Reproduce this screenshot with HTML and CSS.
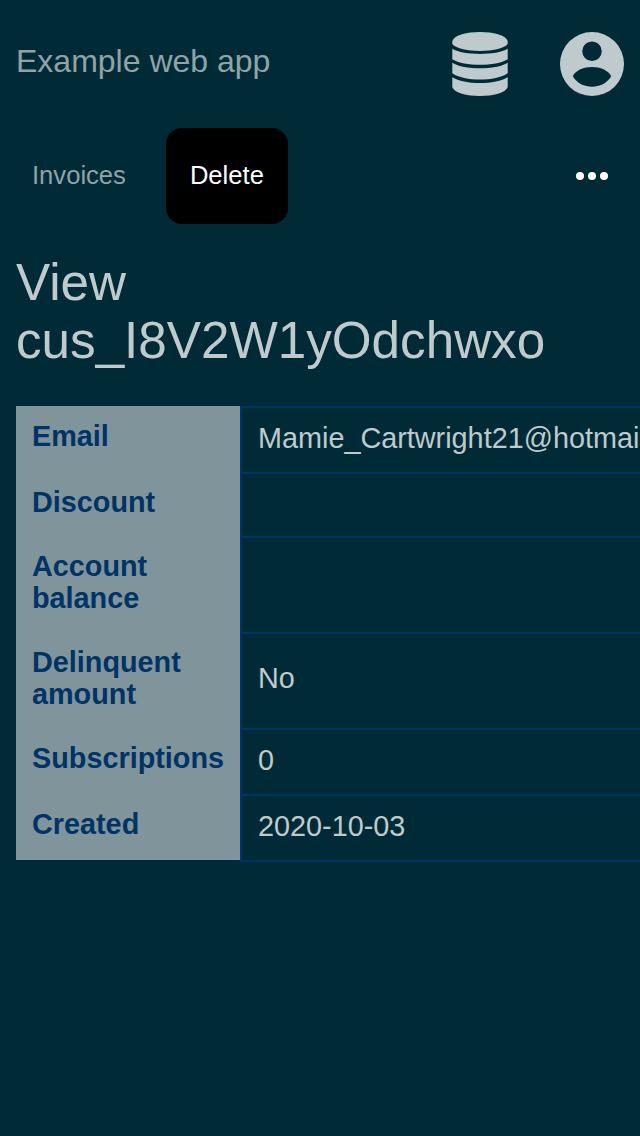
FILE: index.html
```html
<!DOCTYPE html>
<html lang="en">
<head>
<meta charset="utf-8">
<title>Example web app</title>
<link rel="stylesheet" href="styles.css">
</head>
<body>
<header class="header">
  <a class="brand">Example web app</a>
  <div class="menus">
    <svg class="icon" viewBox="0 0 64 64" aria-label="Administration">
      <path d="M4.3 9C8 -3 56 -3 59.7 9V12C52 21.3 12 21.3 4.3 12Z"/>
      <path d="M4.3 16.8C16 23.7 48 23.7 59.7 16.8V27.2C48 34.6 16 34.6 4.3 27.2Z"/>
      <path d="M4.3 30.8C16 38.2 48 38.2 59.7 30.8V41.2C48 49.6 16 49.6 4.3 41.2Z"/>
      <path d="M4.3 45.2C16 52.9 48 52.9 59.7 45.2V55C56 67 8 67 4.3 55Z"/>
    </svg>
    <svg class="icon" viewBox="0 0 64 64" aria-label="Account">
      <path fill-rule="evenodd" d="M32 0A32 32 0 1 1 32 64A32 32 0 1 1 32 0ZM32 9.5A9.7 9.7 0 1 0 32 29A9.7 9.7 0 1 0 32 9.5ZM12.8 44.2C21 58.2 43 58.2 51.2 44.2C45.5 31.8 18.5 31.8 12.8 44.2Z"/>
    </svg>
  </div>
</header>
<nav class="nav">
  <a class="tab">Invoices</a>
  <a class="tab current">Delete</a>
  <svg class="more" viewBox="0 0 32 8" aria-label="More"><circle cx="4" cy="4" r="4"/><circle cx="16" cy="4" r="4"/><circle cx="28" cy="4" r="4"/></svg>
</nav>
<main class="content">
  <h1 class="title">View cus_I8V2W1yOdchwxo</h1>
  <table class="details">
    <tr class="row"><th>Email</th><td>Mamie_Cartwright21@hotmai</td></tr>
    <tr class="row short"><th>Discount</th><td></td></tr>
    <tr class="row tall"><th>Account balance</th><td></td></tr>
    <tr class="row tall"><th>Delinquent amount</th><td>No</td></tr>
    <tr class="row"><th>Subscriptions</th><td>0</td></tr>
    <tr class="row last"><th>Created</th><td>2020-10-03</td></tr>
  </table>
</main>
</body>
</html>
```
FILE: styles.css
```css
* { box-sizing: border-box; }
body {
  margin: 0;
  height: 1136px;
  overflow: hidden;
  background: #002b36;
  color: #bfcacd;
  font-family: "Liberation Sans", Arial, sans-serif;
}
.header {
  display: flex;
  justify-content: space-between;
  align-items: center;
  height: 128px;
  padding: 0 16px;
}
.brand { padding-bottom: 6px; font-size: 32px; color: #8fa3a8; }
.menus { display: flex; gap: 48px; }
.icon { display: block; width: 64px; height: 64px; fill: #bfcacd; }
.nav { display: flex; align-items: center; height: 96px; padding: 0 32px; gap: 40px; }
.tab { padding-bottom: 2px; font-size: 25.6px; line-height: 94px; color: #8fa3a8; }
.current { padding: 0 24px 2px; border-radius: 16px; background: #000; color: #fff; }
.more { width: 32px; height: 8px; margin-left: auto; fill: #fff; }
.content { padding: 30px 0 0 16px; }
.title { margin: 0 0 36px; padding-right: 16px; font-size: 51.2px; font-weight: 400; line-height: 58px; }
.details { display: block; width: 100%; border-spacing: 0; font-size: 28.8px; line-height: 32px; }
.details tbody { display: block; }
.row { display: grid; grid-template-columns: 224px minmax(0, 1fr); height: 66px; }
.short { height: 64px; }
.tall { height: 96px; }
.row th { padding: 14px 0 0 16px; background: #80959b; color: #036; text-align: left; }
.row td {
  display: flex;
  align-items: center;
  padding: 0 0 4px 16px;
  border-top: 2px solid #036;
  border-left: 2px solid #036;
  white-space: nowrap;
}
.tall td { padding-bottom: 6px; }
.last { height: 68px; }
.last th { height: 66px; }
.last td { border-bottom: 2px solid #036; }
```
